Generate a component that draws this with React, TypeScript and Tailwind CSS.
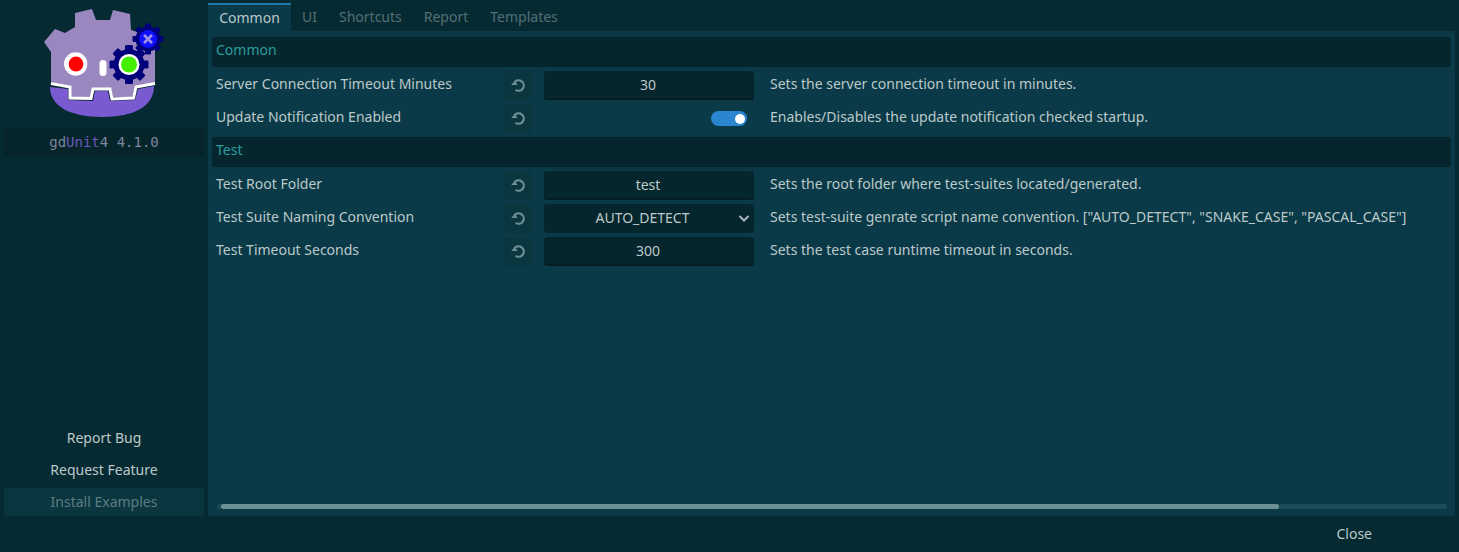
import React from "react";

const font = { fontFamily: '"Noto Sans", sans-serif' };

function ResetIcon() {
  return (
    <svg width="16" height="16" viewBox="0 0 16 16" fill="none">
      <path d="M4.4 5.4 A5.2 5.2 0 1 1 5.6 12.8" stroke="#6d8f94" strokeWidth="2.2" strokeLinecap="butt" />
      <path d="M1.2 8 H7.6 L4.6 4 Z" fill="#6d8f94" />
    </svg>
  );
}

function Gear({ cx, cy, r, teeth, tw, th, fill }: { cx: number; cy: number; r: number; teeth: number; tw: number; th: number; fill: string }) {
  const items = [];
  for (let i = 0; i < teeth; i++) {
    const a = (360 / teeth) * i;
    items.push(<rect key={i} x={cx - tw / 2} y={cy - r - th} width={tw} height={th + 2} rx={1.2} fill={fill} transform={`rotate(${a} ${cx} ${cy})`} />);
  }
  return (
    <g>
      <circle cx={cx} cy={cy} r={r} fill={fill} />
      {items}
    </g>
  );
}

function Logo() {
  return (
    <svg width="208" height="125" viewBox="0 0 208 125" className="block">
      <path
        d="M75 13 L92 9 L96 20 L110 20 L113 10 L130 14 L131 30 L150 36 L155 50 L155 83 L135 87 L132 97 L113 97 L111 88 L92 88 L90 97 L71 97 L71 86 L51 82 L51 52 L44 42 L55 29 L65 33 L75 27 Z"
        fill="#9b87c0"
      />
      <path
        d="M50 87 L68 89 L68 100 L93 101 L95 91 L108 91 L110 101 L135 100 L138 89 L154 86 C154 106 135 117 102 117 C70 117 50 106 50 87 Z"
        fill="#7a5ad0"
      />
      <path d="M51 83.5 L70 87 L70 98 L91 98.5 L93 89 L110 89 L112 99 L133.500 98 L136 87 L155 83.500" fill="none" stroke="#ffffff" strokeWidth="3" />
      <circle cx="75.7" cy="64" r="11.7" fill="#ffffff" />
      <circle cx="76" cy="64" r="7.4" fill="#ff0000" />
      <rect x="99.5" y="60" width="7" height="16" rx="3.5" fill="#ffffff" />
      <Gear cx={129} cy={64.500} r={15.500} teeth={8} tw={8} th={4} fill="#00007a" />
      <circle cx="129" cy="64.500" r="10.5" fill="#ffffff" />
      <circle cx="129" cy="64.500" r="8" fill="#44f000" />
      <Gear cx={148} cy={39} r={12.500} teeth={8} tw={6} th={3} fill="#00007a" />
      <circle cx="148" cy="39" r="9" fill="#1010ff" />
      <path d="M144 35 L152 43 M152 35 L144 43" stroke="#a090e0" strokeWidth="2.600" />
    </svg>
  );
}

function Row({ label, desc, children }: { label: string; desc: string; children: React.ReactNode }) {
  return (
    <div className="flex h-[29px] items-center">
      <div className="w-[292px] pb-[5px] pl-1 text-[14px] text-[#bcc9ca]">{label}</div>
      <div className="flex h-[29px] w-[28px] items-center justify-center rounded-[3px] bg-[#0a3640] pb-[2px]">
        <ResetIcon />
      </div>
      <div className="ml-3 w-[210px]">{children}</div>
      <div className="ml-4 pb-[5px] text-[14px] whitespace-nowrap text-[#bcc9ca]">{desc}</div>
    </div>
  );
}

function Field({ value }: { value: string }) {
  return (
    <div className="flex h-[29px] items-center justify-center rounded-[3px] border-b-2 border-[#041d22] bg-[#06262d] pr-[2px] text-[14px] text-[#bcc9ca]">
      {value}
    </div>
  );
}

function Section({ title }: { title: string }) {
  return (
    <div className="flex h-[30px] items-center rounded-[3px] bg-[#06262d] pb-[6px] pl-1 text-[14px] text-[#2b9c9f]">{title}</div>
  );
}

export default function App() {
  return (
    <div style={font} className="flex h-[552px] w-[1459px] flex-col overflow-hidden bg-[#062a31]">
      <div className="flex h-[516px] pr-1 pl-1">
        <div className="flex w-[200px] shrink-0 flex-col">
          <div className="-ml-1">
            <Logo />
          </div>
          <div className="mt-[2px] flex h-[30px] items-center justify-center rounded-[3px] bg-[#05252b] text-[14px]" style={{ fontFamily: '"DejaVu Sans Mono", monospace' }}>
            <span>
              <span className="text-[#7f86a0]">gd</span>
              <span className="text-[#6d57b8]">Unit</span>
              <span className="text-[#7f86a0]">4 4.1.0</span>
            </span>
          </div>
          <div className="mt-auto flex flex-col text-[14px] text-[#bcc9ca]">
            <div className="flex h-7 items-center justify-center pb-[2px]">Report Bug</div>
            <div className="mt-1 flex h-7 items-center justify-center pb-[2px]">Request Feature</div>
            <div className="mt-1 flex h-7 items-center justify-center rounded-[3px] bg-[#0a3640] pb-[2px] text-[#5d7c82]">Install Examples</div>
          </div>
        </div>
        <div className="ml-1 flex min-w-0 flex-1 flex-col">
          <div className="flex h-[31px] shrink-0 items-stretch pt-[3px] text-[14px] text-[#557076]">
            <div className="flex w-[83px] items-center justify-center border-t-2 border-[#2277aa] bg-[#0a3a47] pb-[2px] text-[#bcc9ca]">Common</div>
            <div className="flex items-center px-[11px] pb-[2px]">UI</div>
            <div className="flex items-center px-[11px] pb-[2px]">Shortcuts</div>
            <div className="flex items-center px-[11px] pb-[2px]">Report</div>
            <div className="flex items-center px-[11px] pb-[2px]">Templates</div>
          </div>
          <div className="flex min-h-0 flex-1 flex-col rounded-b-[3px] bg-[#0a3a47] px-1 pt-[6px]">
            <div className="flex flex-1 flex-col gap-1">
              <Section title="Common" />
              <Row label="Server Connection Timeout Minutes" desc="Sets the server connection timeout in minutes.">
                <Field value="30" />
              </Row>
              <Row label="Update Notification Enabled" desc="Enables/Disables the update notification checked startup.">
                <div className="flex justify-end pr-[7px]">
                  <div className="flex h-[15px] w-9 items-center justify-end rounded-full bg-[#2a86d0] pr-[2px]">
                    <div className="h-[10px] w-[10px] rounded-full bg-white" />
                  </div>
                </div>
              </Row>
              <Section title="Test" />
              <Row label="Test Root Folder" desc="Sets the root folder where test-suites located/generated.">
                <Field value="test" />
              </Row>
              <Row label="Test Suite Naming Convention" desc={'Sets test-suite genrate script name convention. ["AUTO_DETECT", "SNAKE_CASE", "PASCAL_CASE"]'}>
                <div className="relative flex h-[29px] items-center justify-center rounded-[3px] bg-[#06262d] pr-[13px] pb-[2px] text-[14px] text-[#bcc9ca]">
                  AUTO_DETECT
                  <svg className="absolute right-[4px] top-[10px]" width="12" height="10" viewBox="0 0 12 10" fill="none">
                    <path d="M1.5 2 L6 6.5 L10.5 2" stroke="#a9b9bb" strokeWidth="2" />
                  </svg>
                </div>
              </Row>
              <Row label="Test Timeout Seconds" desc="Sets the test case runtime timeout in seconds.">
                <Field value="300" />
              </Row>
            </div>
            <div className="mb-[7px] ml-[5px] mr-1 h-[5px] rounded-full bg-[#1a4c57]">
              <div className="ml-1 h-[5px] w-[1058px] rounded-full bg-[#6d9095]" />
            </div>
          </div>
        </div>
      </div>
      <div className="flex flex-1 items-center justify-end pr-[87px] pb-[2px] text-[14px] text-[#bcc9ca]">Close</div>
    </div>
  );
}
